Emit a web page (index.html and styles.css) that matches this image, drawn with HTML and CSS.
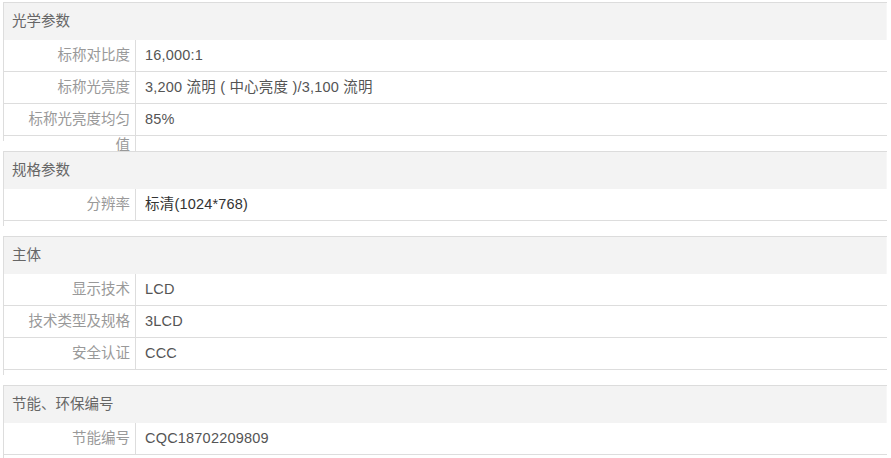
FILE: index.html
```html
<!DOCTYPE html>
<html lang="zh-CN">
<head>
<meta charset="utf-8">
<title>规格参数</title>
<link rel="stylesheet" href="styles.css">
</head>
<body>
<div class="params">
  <div class="group">
    <h3 class="group-title">光学参数</h3>
    <dl class="row"><dt class="label">标称对比度</dt><dd class="value">16,000:1</dd></dl>
    <dl class="row"><dt class="label">标称光亮度</dt><dd class="value">3,200 流明 ( 中心亮度 )/3,100 流明</dd></dl>
    <dl class="row"><dt class="label">标称光亮度均匀值</dt><dd class="value">85%</dd></dl>
  </div>
  <div class="group">
    <h3 class="group-title">规格参数</h3>
    <dl class="row"><dt class="label">分辨率</dt><dd class="value value-dark">标清(1024*768)</dd></dl>
  </div>
  <div class="group">
    <h3 class="group-title">主体</h3>
    <dl class="row"><dt class="label">显示技术</dt><dd class="value">LCD</dd></dl>
    <dl class="row"><dt class="label">技术类型及规格</dt><dd class="value">3LCD</dd></dl>
    <dl class="row"><dt class="label">安全认证</dt><dd class="value">CCC</dd></dl>
  </div>
  <div class="group">
    <h3 class="group-title">节能、环保编号</h3>
    <dl class="row"><dt class="label">节能编号</dt><dd class="value">CQC18702209809</dd></dl>
  </div>
</div>
</body>
</html>
```

FILE: styles.css
```css
html, body {
  margin: 0;
  padding: 0;
  background: #fff;
}

body {
  font-family: "Liberation Sans", Arial, "Noto Sans CJK SC", sans-serif;
  font-size: 14.5px;
  color: #666;
}

.params {
  padding: 2px 4px 0 3px;
}

.group {
  position: relative;
  border-left: 1px solid #ddd;
  border-top: 1px solid #dcdcdc;
  padding-bottom: 5px;
  margin-bottom: 10px;
}

.group-title {
  margin: 0;
  height: 37px;
  line-height: 37px;
  padding-left: 8px;
  background: #f3f3f3;
  border-right: 1px solid #f7f7f7;
  font-size: 14.5px;
  font-weight: normal;
  color: #666;
}

.row {
  display: flex;
  margin: 0;
  height: 31px;
  border-bottom: 1px solid #ddd;
}

.label {
  flex: none;
  align-self: flex-start;
  width: 110px;
  min-height: 29px;
  padding: 2px 5px 0 16px;
  line-height: 26px;
  text-align: right;
  color: #999;
  border-right: 1px solid #ddd;
}

.value {
  flex: 1;
  margin: 0;
  padding-left: 9px;
  line-height: 31px;
  letter-spacing: 0.2px;
  color: #555;
}

.value-dark {
  color: #333;
}
```
